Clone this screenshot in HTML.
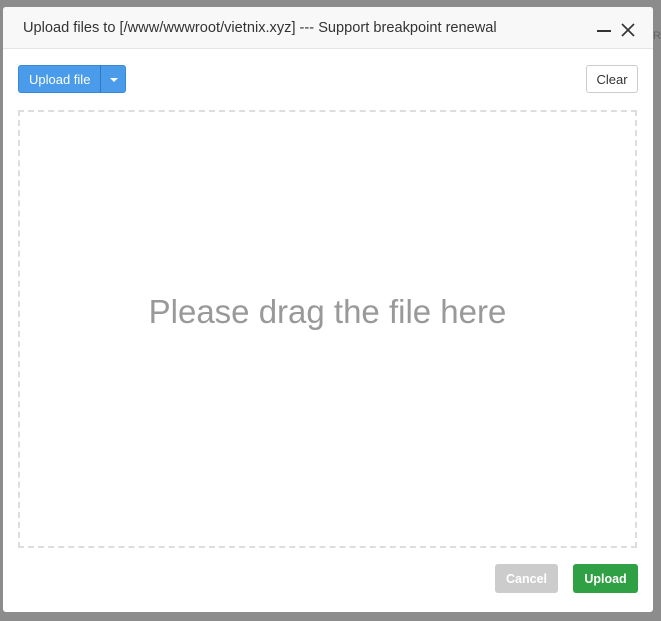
<html><head><style>
body{margin:0;width:661px;height:621px;background:#8c8c8c;position:relative;overflow:hidden;font-family:"Liberation Sans",sans-serif}
.m{position:absolute;left:3px;top:7px;width:650px;height:605px;background:#fff;border-radius:3px}
.h{position:absolute;left:0;top:0;width:650px;height:41px;background:#f8f8f8;border-bottom:1px solid #e5e5e5;border-radius:3px 3px 0 0}
.t{position:absolute;left:20px;top:13px;font-size:14.6px;color:#333}
.b{position:absolute;box-sizing:border-box;border-radius:3px;font-size:12.5px;text-align:center}
</style></head><body>
<div style="position:absolute;left:653px;top:30px;color:#666;font-size:11px">RL</div>
<div class="m">
<div class="h"><div class="t">Upload files to [/www/wwwroot/vietnix.xyz] --- Support breakpoint renewal</div>
<div style="position:absolute;left:594px;top:23px;width:14px;height:2px;background:#333"></div>
<svg style="position:absolute;left:618px;top:16px" width="14" height="14"><path d="M1 1L13 13M13 1L1 13" stroke="#333" stroke-width="1.6"/></svg>
</div>
<div class="b" style="left:15px;top:58px;width:108px;height:28px;background:#4a9bea;border:1px solid #3a88d8;color:#fff;text-align:left;padding:6px 0 0 10px;font-size:13px">Upload file
<div style="position:absolute;left:81px;top:-1px;width:1px;height:28px;background:#2f78c4"></div>
<div style="position:absolute;left:91px;top:12px;border:4px solid transparent;border-top:4px solid #fff;border-bottom:0"></div></div>
<div class="b" style="left:583px;top:58px;width:52px;height:28px;border:1px solid #ccc;color:#333;padding-top:6px;font-size:13px">Clear</div>
<div style="position:absolute;left:15px;top:103px;width:619px;height:438px;box-sizing:border-box;border:2px dashed #ddd;text-align:center;font-size:33px;color:#999"><div style="position:absolute;left:0;right:0;top:181px;line-height:38px">Please drag the file here</div></div>
<div class="b" style="left:492px;top:557px;width:63px;height:29px;background:#ccc;color:#fff;font-weight:bold;padding-top:8px">Cancel</div>
<div class="b" style="left:570px;top:557px;width:65px;height:29px;background:#2fa043;color:#fff;font-weight:bold;padding-top:8px">Upload</div>
</div>
</body></html>
